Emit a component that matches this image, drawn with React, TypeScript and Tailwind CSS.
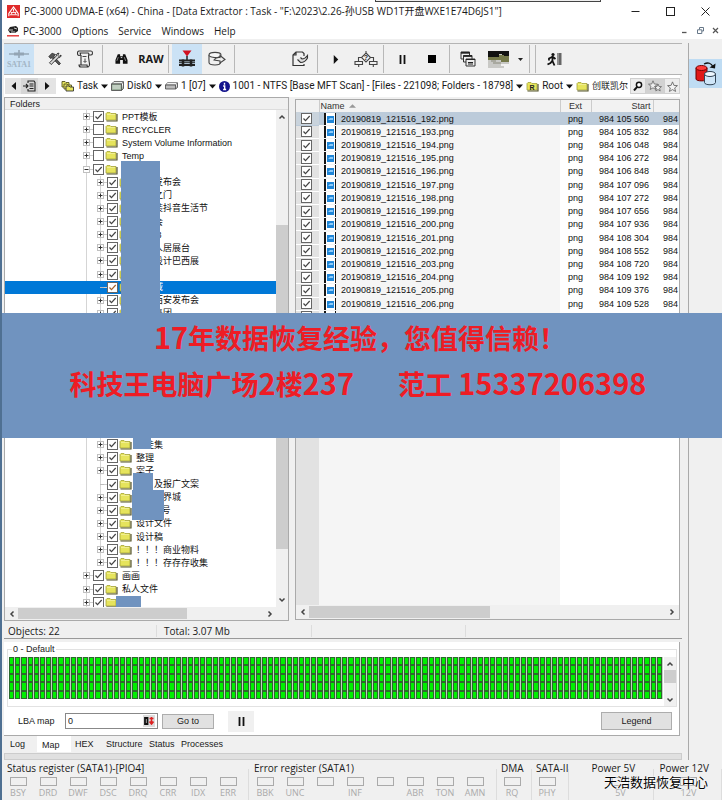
import type { ReactNode } from 'react';

const uiFont = "font-['Open_Sans','Noto_Sans_CJK_SC',sans-serif]";
const listFont = "font-['Liberation_Sans','Noto_Sans_CJK_SC',sans-serif]";

interface TreeItem {
  label: string;
  level: 1 | 2;
  checked?: boolean;
  toggle?: '+' | '-' | '';
  selected?: boolean;
}

const tree: TreeItem[] = [
  { label: 'PPT模板', level: 1, checked: true },
  { label: 'RECYCLER', level: 1 },
  { label: 'System Volume Information', level: 1 },
  { label: 'Temp', level: 1 },
  { label: '', level: 1, checked: true, toggle: '-' },
  { label: '　　发布会', level: 2, checked: true },
  { label: '　　之门', level: 2, checked: true },
  { label: '　　装抖音生活节', level: 2, checked: true },
  { label: '　　会', level: 2, checked: true },
  { label: '　　 8', level: 2, checked: true },
  { label: '　　人居展台', level: 2, checked: true },
  { label: '　　设计巴西展', level: 2, checked: true },
  { label: '', level: 2, checked: true },
  { label: '　　域', level: 2, checked: true, toggle: '', selected: true },
  { label: '　　西安发布会', level: 2, checked: true },
  { label: '　　集团', level: 2, checked: true },
  { label: '', level: 2, checked: true },
  { label: '', level: 2, checked: true },
  { label: '', level: 2, checked: true },
  { label: '', level: 2, checked: true },
  { label: '', level: 2, checked: true },
  { label: '', level: 2, checked: true },
  { label: '', level: 2, checked: true },
  { label: '', level: 2, checked: true },
  { label: '', level: 2, checked: true },
  { label: '　佳集', level: 2, checked: true },
  { label: '整理', level: 2, checked: true },
  { label: '案子', level: 2, checked: true },
  { label: '　　及报广文案', level: 2, checked: true, toggle: '' },
  { label: '　　　界城', level: 2, checked: true },
  { label: '　　 0号', level: 2, checked: true },
  { label: '设计文件', level: 2, checked: true },
  { label: '设计稿', level: 2, checked: true },
  { label: '！！！商业物料', level: 2, checked: true },
  { label: '！！！存存存收集', level: 2, checked: true },
  { label: '画画', level: 1, checked: true },
  { label: '私人文件', level: 1, checked: true },
  { label: '', level: 1, checked: true },
];

const files = [
  ['192', '984 105 560'],
  ['193', '984 105 832'],
  ['194', '984 106 048'],
  ['195', '984 106 272'],
  ['196', '984 106 848'],
  ['197', '984 107 096'],
  ['198', '984 107 272'],
  ['199', '984 107 656'],
  ['200', '984 107 936'],
  ['201', '984 108 304'],
  ['202', '984 108 552'],
  ['203', '984 108 720'],
  ['204', '984 109 192'],
  ['205', '984 109 376'],
  ['206', '984 109 528'],
  ['207', '984 109 744'],
];

function Folder({ letter }: { letter?: string }) {
  return (
    <svg viewBox="0 0 13 11" className="w-[13px] h-[11px] shrink-0">
      <path d="M1 9V2.5L2 1.5H5L6 2.5H11V9Z" fill="#e6e45c" stroke="#a5a33a" strokeWidth="0.8" />
      {!letter && <path d="M2 3.5H10" stroke="#f0ee90" />}
      <path d="M1.5 10H12V3" fill="none" stroke="#55542a" strokeWidth="1.2" />
      {letter && (
        <text x="3.5" y="8.5" fontSize="7" fontWeight="700" fill="#222" fontFamily="Liberation Sans">
          {letter}
        </text>
      )}
    </svg>
  );
}

function Check({ checked, label, warm }: { checked?: boolean; label: string; warm?: boolean }) {
  return (
    <span className="relative inline-flex w-[11px] h-[11px] shrink-0">
      <input
        type="checkbox"
        aria-label={label}
        defaultChecked={checked}
        className="peer appearance-none w-[11px] h-[11px] bg-white border border-[#666]"
      />
      <svg viewBox="0 0 11 11" className="absolute inset-0 pointer-events-none hidden peer-checked:block">
        <path d="M2.5 5.5L4.5 7.7L8.7 3" fill="none" stroke={warm ? '#a8642c' : '#444'} strokeWidth="1.2" />
      </svg>
    </span>
  );
}

function Arrow({ dir, className = '' }: { dir: 'up' | 'down' | 'left' | 'right'; className?: string }) {
  const paths = {
    up: 'M1.5 5.5L4 3L6.5 5.5',
    down: 'M1.5 2.5L4 5L6.5 2.5',
    left: 'M5.5 1.5L3 4L5.5 6.5',
    right: 'M2.5 1.5L5 4L2.5 6.5',
  };
  return (
    <button aria-label={`Scroll ${dir}`} className={`flex items-center justify-center shrink-0 ${className}`}>
      <svg viewBox="0 0 8 8" className="w-2 h-2">
        <path d={paths[dir]} fill="none" stroke="#444" strokeWidth="1.5" />
      </svg>
    </button>
  );
}

function Tool({ label, active, children }: { label: string; active?: boolean; children: ReactNode }) {
  return (
    <button
      aria-label={label}
      className={`w-[30px] h-[30px] shrink-0 flex items-center justify-center ${active ? 'bg-[#cbe2f5]' : ''}`}
    >
      {children}
    </button>
  );
}

function Sep() {
  return <div className="w-px h-7 ml-0.5 mr-[3px] shrink-0 bg-[#b8b8b8]" />;
}

function Caret() {
  return (
    <svg viewBox="0 0 7 5" className="w-[7px] h-[5px] shrink-0">
      <path d="M0 0.5H7L3.5 4.5Z" fill="#111" />
    </svg>
  );
}

function TitleBar() {
  return (
    <header className="h-[22px] flex items-center pl-[5px] bg-white">
      <svg viewBox="0 0 14 14" className="w-[13px] h-[13px] mr-1 shrink-0">
        <rect width="14" height="14" fill="#e02a2a" />
        <path d="M2 12V9L7 2L12 9V12" fill="none" stroke="#fff" strokeWidth="1.2" />
        <path d="M4 8H10M3 10.5H11M7 4V7M5 8V10M9 8V10" stroke="#fff" />
      </svg>
      <h1 className="flex-1 text-[10px] leading-3 whitespace-nowrap">
        PC-3000 UDMA-E (x64) - China - [Data Extractor : Task - "F:\2023\2.26-孙USB WD1T开盘WXE1E74D6JS1"]
      </h1>
      <div className="flex">
        <button aria-label="Minimize" className="w-[35px] flex justify-center">
          <svg viewBox="0 0 9 9" className="w-[9px] h-[9px]"><path d="M0.5 4.5H8.5" stroke="#222" /></svg>
        </button>
        <button aria-label="Maximize" className="w-[35px] flex justify-center">
          <svg viewBox="0 0 9 9" className="w-[9px] h-[9px]"><rect x="0.5" y="0.5" width="8" height="8" fill="none" stroke="#222" /></svg>
        </button>
        <button aria-label="Close" className="w-[34px] flex justify-center">
          <svg viewBox="0 0 9 9" className="w-[9px] h-[9px]"><path d="M0.5 0.5L8.5 8.5M8.5 0.5L0.5 8.5" stroke="#222" /></svg>
        </button>
      </div>
    </header>
  );
}

function MenuBar() {
  return (
    <nav className="h-[17px] flex items-center pl-[5px] bg-white text-[10px] leading-3">
      <svg viewBox="0 0 12 12" className="w-3 h-3 mr-1 shrink-0">
        <path d="M1 5L3 2L9 1L11 3V6L8 8L3 8Z" fill="#222" />
        <path d="M2 5H6M7 3L10 4M4 7H8" stroke="#ddd" strokeWidth="0.9" />
        <path d="M0 10.8H12" stroke="#e03030" strokeWidth="1.4" />
      </svg>
      <div className="flex-1 flex gap-[10px]">
        {['PC-3000', 'Options', 'Service', 'Windows', 'Help'].map((m) => (
          <button key={m}>{m}</button>
        ))}
      </div>
      <div className="flex text-[#555]">
        <button aria-label="Minimize child" className="w-[15px] flex justify-center">
          <svg viewBox="0 0 7 7" className="w-[7px] h-[7px]"><path d="M1 5.5H5.5" stroke="#555" strokeWidth="1.3" /></svg>
        </button>
        <button aria-label="Restore child" className="w-4 flex justify-center">
          <svg viewBox="0 0 7 7" className="w-[7px] h-[7px]"><path d="M2.5 2.5V0.5H6.5V4H5M0.5 2.8H4.8V6.5H0.5Z" fill="none" stroke="#678" /></svg>
        </button>
        <button aria-label="Close child" className="w-[14px] flex justify-center">
          <svg viewBox="0 0 7 7" className="w-[7px] h-[7px]"><path d="M1 1L6 6M6 1L1 6" stroke="#555" strokeWidth="1.2" /></svg>
        </button>
      </div>
    </nav>
  );
}

function Toolbar() {
  return (
    <div className="h-8 mr-[6px] flex items-center border-y border-[#b4b4b4] overflow-hidden">
      <Tool label="SATA1" active>
        <svg viewBox="0 0 26 26" className="w-[26px] h-[26px]">
          <path d="M3 8H23" stroke="#93a5b4" strokeWidth="1.4" />
          <path d="M8 6.5H18V9.5H8Z" fill="#93a5b4" />
          <path d="M13 4V12" stroke="#93a5b4" strokeWidth="1.6" />
          <text x="13" y="21" textAnchor="middle" fontSize="8" fontWeight="700" fill="#a3b5c4" fontFamily="Liberation Serif">SATA1</text>
        </svg>
      </Tool>
      <div className="w-[6px] shrink-0" />
      <Tool label="Settings">
        <svg viewBox="0 0 14 14" className="w-[14px] h-[14px]">
          <path d="M0.8 4.5L4 1.2L7.5 2.5L5.8 4.2L12.5 11.5L11 13L4 5.8L2.5 6.5Z" fill="#555" stroke="#222" strokeWidth="0.7" />
          <path d="M13 3L11 4.5L9.7 3.3L11 1.3C9.5 0.8 8 2.3 8.3 4L1.5 10.8L3.2 12.5L10 5.8C11.7 6 13.5 4.5 13 3Z" fill="#ddd" stroke="#222" strokeWidth="0.9" />
        </svg>
      </Tool>
      <Tool label="Script">
        <svg viewBox="0 0 18 18" className="w-[18px] h-[18px]">
          <path d="M3 5.5C1 5.5 1 1 3 1H15C17 1 17 5 15 5H12.5M3 5.5C5 5.5 5 3 3.5 3H12C13.5 3 12.5 5 12.5 7L13.5 14C13.8 17.5 11 17.5 11 15H3C3 17 4 17 5 17H12.5M5 5V14.5" fill="none" stroke="#333" strokeWidth="1.1" />
          <path d="M6.5 6.5H10.5M9 8.5V12M7.5 11L9 12.5L10.5 11" fill="none" stroke="#333" strokeWidth="0.9" />
        </svg>
      </Tool>
      <Sep />
      <Tool label="Find">
        <svg viewBox="0 0 14 12" className="w-[13px] h-[12px]">
          <path d="M3 1H5.5V3H8.5V1H11L13.5 7V11H8.5V7H5.5V11H0.5V7Z" fill="#111" />
          <path d="M3.5 4L2 8M10 4L11.5 8" stroke="#aaa" strokeWidth="0.8" />
          <path d="M6.2 4.5H7.8" stroke="#eee" />
        </svg>
      </Tool>
      <Tool label="RAW">
        <span className="text-[11px] font-bold leading-4">RAW</span>
      </Tool>
      <Sep />
      <Tool label="Map view" active>
        <svg viewBox="0 0 18 18" className="w-[18px] h-[18px]">
          <path d="M4.5 0.5H13.5L9 6.5Z" fill="#d01020" />
          <path d="M9 6V10" stroke="#222" strokeWidth="1.5" />
          <path d="M1 10.5H17M1 15H17" stroke="#222" strokeWidth="1.8" />
          <path d="M1 12.7H17" stroke="#222" strokeWidth="1" />
          <path d="M5 9.5V16.5M13 9.5V16.5" stroke="#222" strokeWidth="2.5" />
        </svg>
      </Tool>
      <Tool label="Save disk">
        <svg viewBox="0 0 18 16" className="w-[18px] h-4">
          <path d="M1 4V11.5C1 13 4 14 7 14S12.5 13 12.5 11.5" fill="none" stroke="#444" strokeWidth="1.1" />
          <ellipse cx="7" cy="4" rx="6" ry="2.6" fill="#f6f6f6" stroke="#444" strokeWidth="1.1" />
          <path d="M6 9C8 6.5 10 6 12 6.5V4.5L17 8.5L12 12V10C10 9.5 8 9.5 6 9Z" fill="#eee" stroke="#444" strokeWidth="1.1" />
        </svg>
      </Tool>
      <Sep />
      <div className="w-[47px] shrink-0" />
      <Tool label="Export">
        <svg viewBox="0 0 17 16" className="w-[17px] h-4">
          <path d="M12 5V2.5L10.5 1H4L1 4V14.5H12V13M4 1V4H1" fill="none" stroke="#333" strokeWidth="1.2" />
          <path d="M5.5 8.5L8.5 11.5C11 11.5 14 10 15.5 7V4.5C14 6.5 11.5 8 10 8L8.5 6.5" fill="#ddd" stroke="#333" strokeWidth="1.1" />
        </svg>
      </Tool>
      <Sep />
      <Tool label="Start">
        <svg viewBox="0 0 6 10" className="w-[6px] h-[9px]"><path d="M0.5 0L5.5 5L0.5 10Z" fill="#111" /></svg>
      </Tool>
      <Tool label="Flow">
        <svg viewBox="0 0 24 17" className="w-6 h-[17px]">
          <path d="M12 0V2M12 2L16.5 6.5L12 11L7.5 6.5Z" fill="#f7f7f7" stroke="#444" strokeWidth="1.1" />
          <text x="12" y="9" textAnchor="middle" fontSize="7" fontWeight="700" fill="#222" fontFamily="Liberation Sans">?</text>
          <path d="M7.5 6.5H4.5V10M16.5 6.5H19.5V10M1 10.5H8.5V13.5H1ZM15.5 10.5H23V13.5H15.5ZM4.7 13.5V16M19.3 13.5V16" fill="none" stroke="#444" strokeWidth="1.1" />
        </svg>
      </Tool>
      <Sep />
      <Tool label="Pause">
        <svg viewBox="0 0 7 9" className="w-[7px] h-[9px]"><path d="M1.5 0V9M5.5 0V9" stroke="#111" strokeWidth="1.8" /></svg>
      </Tool>
      <Tool label="Stop">
        <span className="w-2 h-2 bg-black" />
      </Tool>
      <Sep />
      <Tool label="Cascade">
        <svg viewBox="0 0 16 16" className="w-4 h-4">
          <path d="M1 1H9.5V8H1Z" fill="#eee" stroke="#333" />
          <path d="M1 1.8H9.5" stroke="#222" strokeWidth="1.8" />
          <path d="M3.5 4.5H12V11H3.5Z" fill="#eee" stroke="#333" />
          <path d="M3.5 5H12" stroke="#222" strokeWidth="1.8" />
          <path d="M6 8H15V15H6Z" fill="#eee" stroke="#333" />
          <path d="M6 8.5H15M8 11.5H13M8 13H13" stroke="#222" strokeWidth="1.2" />
        </svg>
      </Tool>
      <Tool label="Picture">
        <svg viewBox="0 0 21 17" className="w-[21px] h-[17px]">
          <rect width="21" height="17" fill="#c9c9c6" />
          <path d="M0 0H21V5H14V3H11V6H0Z" fill="#111" />
          <path d="M0 6H11V4H16V5H21V11H13V9H0Z" fill="#75794a" />
          <path d="M3 9H8V11H13V13H5V11H3Z" fill="#a9a9a0" />
          <path d="M13 13H21V17H16V15H13Z" fill="#f3f3f3" />
        </svg>
      </Tool>
      <button aria-label="Picture options" className="w-[14px] flex justify-center shrink-0">
        <svg viewBox="0 0 5 3" className="w-[5px] h-[3px]"><path d="M0 0H5L2.5 3Z" fill="#222" /></svg>
      </button>
      <Sep />
      <Sep />
      <Tool label="Exit">
        <svg viewBox="0 0 15 15" className="w-[15px] h-[15px]">
          <rect x="10" y="1" width="4.5" height="12" fill="#666" />
          <path d="M11 1V13" stroke="#bbb" />
          <circle cx="6" cy="2.5" r="1.6" fill="#111" />
          <path d="M5.5 4V9L7.5 13.5M5.5 8.5L3.5 11L0.5 12.5M6 5L8.5 7M5 5L2 6.5V8.5" fill="none" stroke="#111" strokeWidth="1.8" />
        </svg>
      </Tool>
    </div>
  );
}

function Breadcrumb() {
  return (
    <nav className="h-[22px] mr-2 pl-px flex items-center bg-white text-[10px] leading-3 whitespace-nowrap overflow-hidden font-['Roboto','Noto_Sans_CJK_SC',sans-serif]">
      <div className="flex h-4 bg-[#e4e4e4]">
        <button aria-label="Back" className="w-4 flex items-center justify-center">
          <svg viewBox="0 0 5 8" className="w-[5px] h-2"><path d="M5 0V8L0.5 4Z" fill="#111" /></svg>
        </button>
        <button aria-label="History" className="w-[17px] flex items-center justify-center bg-[#d6d6d6]">
          <svg viewBox="0 0 13 12" className="w-[13px] h-3">
            <path d="M5 3V1H11L12 2.5V11H5V9M0 6H5M3 4L5 6L3 8" fill="none" stroke="#222" strokeWidth="1.1" />
            <path d="M6.5 4H10.5M6.5 6H10.5M6.5 8.5H10.5" stroke="#222" />
          </svg>
        </button>
        <button aria-label="Forward" className="w-[18px] flex items-center justify-center">
          <svg viewBox="0 0 5 8" className="w-[5px] h-2"><path d="M0 0V8L4.5 4Z" fill="#111" /></svg>
        </button>
      </div>
      <a href="#task" className="flex items-center gap-[3px] ml-[5px]">
        <svg viewBox="0 0 13 12" className="w-[13px] h-3">
          <path d="M1 7V1.5H4L5 2.5H8V7Z" fill="#e6e45c" stroke="#555320" strokeWidth="0.9" />
          <path d="M3 9V4H6L7 5H10.5V9Z" fill="#e6e45c" stroke="#555320" strokeWidth="0.9" />
          <path d="M5 11V6H8L9 7H12.5V11Z" fill="#e6e45c" stroke="#333" strokeWidth="0.9" />
        </svg>
        Task <Caret />
      </a>
      <a href="#disk0" className="flex items-center gap-[3px] ml-[3px]">
        <svg viewBox="0 0 13 10" className="w-[13px] h-[10px]">
          <path d="M3 0.5H12.5L10.5 3H0.5Z" fill="#e8eee8" stroke="#555" strokeWidth="0.8" />
          <path d="M0.5 3H10.5V9.5H0.5ZM12.5 1V7.5L10.5 9.5" fill="#9ab09a" stroke="#444" strokeWidth="0.8" />
          <path d="M1.5 5H9.5M1.5 7H9.5" stroke="#e8eee8" />
        </svg>
        Disk0 <Caret />
      </a>
      <a href="#part1" className="flex items-center gap-[3px] ml-[3px]">
        <svg viewBox="0 0 13 8" className="w-[13px] h-2">
          <path d="M2.5 0.5H12.5L10.5 3H0.5Z" fill="#f3f3f3" stroke="#777" strokeWidth="0.8" />
          <path d="M0.5 3H10.5V7H0.5ZM12.5 1V5.5L10.5 7" fill="#bbb" stroke="#444" strokeWidth="0.8" />
        </svg>
        1 [07] <Caret />
      </a>
      <a href="#scan" className="flex items-center gap-[3px] ml-[3px]">
        <svg viewBox="0 0 12 12" className="w-[11px] h-[11px]">
          <circle cx="6" cy="6" r="6" fill="#14148c" />
          <path d="M6 2V4M4.5 5.5H6.2V9M4.5 9.3H7.8" stroke="#fff" strokeWidth="1.5" fill="none" />
        </svg>
        1001 - NTFS [Base MFT Scan] - [Files - 221098; Folders - 18798] <Caret />
      </a>
      <a href="#root" className="flex items-center gap-[3px] ml-[3px]">
        <Folder letter="R" />
        Root <Caret />
      </a>
      <a href="#folder" className="flex items-center gap-[3px] ml-[3px]">
        <Folder />
        <span className="text-[9px]">创联凯尔</span>
      </a>
      <div className="flex-1" />
      <div className="flex shrink-0 bg-[#ececec]">
        <button aria-label="Search" className="w-4 h-4 border border-[#d0d0d0] flex items-center justify-center">
          <svg viewBox="0 0 10 10" className="w-[10px] h-[10px]">
            <circle cx="6" cy="3.8" r="2.6" fill="#fff" stroke="#111" strokeWidth="1.5" />
            <path d="M4.2 5.8L1 9.5" stroke="#111" strokeWidth="2" />
          </svg>
        </button>
        <button aria-label="Bookmarks" className="w-[18px] h-4 bg-[#d2d2d2] flex items-center justify-center">
          <svg viewBox="0 0 14 12" className="w-[14px] h-3">
            <path d="M5 0.8L6.3 4L9.5 4.2L7 6.3L7.8 9.5L5 7.8L2.2 9.5L3 6.3L0.5 4.2L3.7 4Z" fill="#eee" stroke="#666" strokeWidth="0.8" />
            <path d="M10 4L11 6.5L13.5 6.6L11.6 8.3L12.2 11L10 9.5L7.8 11L8.4 8.3L6.5 6.6L9 6.5Z" fill="#eee" stroke="#666" strokeWidth="0.8" />
          </svg>
        </button>
        <button aria-label="Add bookmark" className="w-4 h-4 border border-[#d0d0d0] flex items-center justify-center">
          <svg viewBox="0 0 10 10" className="w-[11px] h-[11px]">
            <path d="M5 0.8L6.3 4L9.5 4.2L7 6.3L7.8 9.5L5 7.8L2.2 9.5L3 6.3L0.5 4.2L3.7 4Z" fill="#f4f4f4" stroke="#666" strokeWidth="0.8" />
          </svg>
        </button>
      </div>
    </nav>
  );
}

function TreeRow({ item }: { item: TreeItem }) {
  const toggle = item.toggle ?? '+';
  const indent = item.level === 2 ? 'pl-[92px]' : 'pl-[78px]';
  return (
    <li className={`flex-1 min-h-0 flex items-center pr-2 ${indent} ${item.selected ? 'bg-[#0078d7] text-white' : ''}`}>
      {toggle ? (
        <button aria-label={`Toggle ${item.label.trim()}`} className="w-[7px] h-[7px] shrink-0 border border-[#c0c0c0] bg-white">
          <svg viewBox="0 0 5 5" className="w-[5px] h-[5px]">
            <path d={toggle === '+' ? 'M0.5 2.5H4.5M2.5 0.5V4.5' : 'M0.5 2.5H4.5'} stroke="#333" strokeWidth="1" />
          </svg>
        </button>
      ) : (
        <span className="w-1 ml-[3px] shrink-0 border-t border-[#bbb]" />
      )}
      <span className="w-[3px] shrink-0 border-t border-[#ccc]" />
      <span className="mr-px flex"><Check checked={item.checked} label={item.label.trim() || 'Folder'} warm={item.selected} /></span>
      <Folder />
      <span className="ml-1 whitespace-pre">{item.label}</span>
    </li>
  );
}

function FolderPanel() {
  return (
    <section className={`w-[285px] shrink-0 flex flex-col border border-[#aaa] bg-white ${listFont}`}>
      <h2 className="h-3 pl-[5px] text-[9px] leading-3 bg-[#f0f0f0] border-b border-[#ddd]">Folders</h2>
      <div className="flex-1 flex min-h-0">
        <div className="flex-1 relative overflow-hidden flex">
          <div className="absolute left-[81px] inset-y-0 border-l border-[#d5d5d5]" />
          <div className="absolute left-[95px] top-[66px] bottom-[46px] border-l border-[#d5d5d5]" />
          <ul className="relative flex-1 flex flex-col -mb-0.5 text-[9px] leading-3 text-[#111]">
            {tree.map((item, i) => (
              <TreeRow key={i} item={item} />
            ))}
          </ul>
          {/* redaction patches over client names */}
          <div className="absolute left-[116px] top-[51px] w-[39px] h-[160px] bg-[#7093bf]" />
          <div className="absolute left-[128px] top-[320px] w-[18px] h-[19px] bg-[#7093bf]" />
          <div className="absolute left-[128px] top-[363px] w-[20px] h-[20px] bg-[#7093bf]" />
          <div className="absolute left-[127px] top-[380px] w-[32px] h-[30px] bg-[#7093bf]" />
          <div className="absolute left-[111px] top-[486px] w-[25px] h-[11px] bg-[#7093bf]" />
        </div>
        <div className="w-3 shrink-0 flex flex-col bg-[#f0f0f0]">
          <Arrow dir="up" className="h-[14px]" />
          <div className="h-[101px]" />
          <div className="flex-1 bg-[#cdcdcd]" />
          <div className="h-[44px]" />
          <Arrow dir="down" className="h-[14px]" />
        </div>
      </div>
      <div className="h-[13px] shrink-0 flex bg-[#f0f0f0]">
        <Arrow dir="left" className="w-[13px]" />
        <div className="w-[169px] my-px bg-[#cdcdcd]" />
        <div className="flex-1" />
        <Arrow dir="right" className="w-[13px] mr-3" />
      </div>
    </section>
  );
}

function FilePanel() {
  return (
    <section className={`flex-1 min-w-0 mt-0.5 mb-px flex flex-col border border-[#aaa] bg-white ${listFont}`}>
      <table className="w-full h-[224px] table-fixed border-collapse text-[9px] leading-3 text-[#111]">
        <colgroup>
          <col className="w-[23px]" />
          <col />
          <col className="w-[31px]" />
          <col className="w-[62px]" />
          <col className="w-[26px]" />
        </colgroup>
        <thead>
          <tr className="h-3 bg-[#f2f2f2] text-[#333]">
            <th className="p-0 border-r border-[#ccc]"></th>
            <th className="p-0 pl-px text-left font-normal border-r border-[#ccc]">
              <span className="flex items-center gap-1">
                Name
                <svg viewBox="0 0 8 4" className="w-[7px] h-1"><path d="M0 4L4 0L8 4Z" fill="#999" /></svg>
              </span>
            </th>
            <th className="p-0 font-normal border-r border-[#ccc]">Ext</th>
            <th className="p-0 pr-0.5 text-right font-normal border-r border-[#ccc]">Start</th>
            <th className="p-0"></th>
          </tr>
        </thead>
        <tbody>
          {files.map(([n, start], i) => (
            <tr key={n} className={i === 0 ? 'bg-[#bccbda]' : ''}>
              <td className={`p-0 border-b ${i === 0 ? 'bg-[#c9d3dc] border-[#bccbda]' : 'bg-[#e2e2e2] border-white'}`}>
                <span className="flex justify-center mr-0.5"><Check checked label={`Select ${n}`} /></span>
              </td>
              <td className={`p-0 ${i === 0 ? '' : 'bg-[#f5f5f5]'}`}>
                <span className="flex items-center gap-[5px] pl-[5px]">
                  <svg viewBox="0 0 12 12" className="w-3 h-3">
                    <rect width="12" height="12" fill="#151515" />
                    <rect x="2" width="9" height="12" fill="#fff" />
                    <rect x="3" y="3" width="7" height="7" fill="#1f86d8" />
                    <path d="M4 7L6 5H9V7Z" fill="#8ccaf8" />
                  </svg>
                  20190819_121516_{n}.png
                </span>
              </td>
              <td className="p-0 text-center">png</td>
              <td className="p-0 pr-1 text-right">{start}</td>
              <td className="p-0 pl-[10px] whitespace-nowrap">984</td>
            </tr>
          ))}
        </tbody>
      </table>
      <div className="flex-1 flex">
        <div className="w-[23px] bg-[#e2e2e2]" />
        <div className="flex-1 bg-[#f5f5f5]" />
        <div className="w-[119px]" />
      </div>
      <div className="h-[14px] shrink-0 flex bg-[#f0f0f0]">
        <Arrow dir="left" className="w-[13px]" />
        <div className="w-[181px] my-px bg-[#cdcdcd]" />
        <div className="flex-1" />
        <Arrow dir="right" className="w-[14px]" />
      </div>
    </section>
  );
}

function StatusBar() {
  return (
    <div className="h-4 mt-0.5 mr-[6px] flex items-center border-b border-[#999] text-[10px] leading-3">
      <span className="w-[153px] pl-1 border-r border-[#ddd]">Objects: 22</span>
      <span className="w-[155px] pl-[7px] border-r border-[#ddd]">Total: 3.07 Mb</span>
      <span className="w-[154px] h-3 border-r border-[#ddd]" />
    </div>
  );
}

function MapPanel() {
  return (
    <section className={`mt-[3px] mr-2 pt-px bg-white border-b border-r border-[#aaa] text-[9px] leading-3 ${listFont}`}>
      <fieldset className="ml-[3px] mr-0.5 pt-0.5 border border-[#e2e2e2]">
        <legend className="ml-1 px-px text-[#222]">0 - Default</legend>
        <div className="flex">
          <div className="flex-1 h-[42px] ml-px mb-[7px] grid grid-rows-5 grid-cols-[repeat(106,minmax(0,1fr))] bg-[#c4ccc4]">
            {Array.from({ length: 530 }, (_, i) => (
              <span key={i} className="mr-px bg-[#00f000] border border-[#2c6a2c]" />
            ))}
          </div>
          <div className="w-3 ml-px flex flex-col bg-[#f0f0f0]">
            <Arrow dir="up" className="h-[13px]" />
            <div className="h-[13px] bg-[#cdcdcd]" />
            <div className="flex-1" />
            <Arrow dir="down" className="h-[13px]" />
          </div>
        </div>
      </fieldset>
      <div className="h-[28px] flex items-center pl-[14px] pr-[7px]">
        <label htmlFor="lba" className="w-[47px]">LBA map</label>
        <div className="w-[93px] h-4 flex items-center border border-[#888] bg-white">
          <input id="lba" defaultValue="0" className="w-0 flex-1 pl-0.5 outline-none bg-transparent" />
          <button aria-label="Number base" className="w-3 h-3 mr-0.5 bg-[#ddd] flex items-center justify-center">
            <svg viewBox="0 0 10 8" className="w-[10px] h-2">
              <path d="M1 1H3.5V7H1Z" fill="none" stroke="#111" strokeWidth="1.8" />
              <path d="M7.5 0V7M5.5 4.5L7.5 7L9.5 4.5M5.5 1.5H9.5" stroke="#d22" strokeWidth="1.6" fill="none" />
            </svg>
          </button>
        </div>
        <button className="w-[52px] h-[15px] ml-1 bg-[#e1e1e1] border border-[#adadad]">Go to</button>
        <button aria-label="Pause map" className="w-[26px] h-[21px] ml-[14px] bg-[#f0f0f0] flex items-center justify-center mr-auto">
          <svg viewBox="0 0 7 9" className="w-[7px] h-[9px]"><path d="M1.5 0V9M5.5 0V9" stroke="#111" strokeWidth="1.8" /></svg>
        </button>
        <button className="w-[71px] h-[18px] bg-[#e1e1e1] border border-[#adadad]">Legend</button>
      </div>
    </section>
  );
}

function Tabs() {
  return (
    <div role="tablist" className={`h-[17px] flex items-start text-[9px] leading-4 ${listFont}`}>
      <button role="tab" className="w-[33px] pl-[6px] text-left">Log</button>
      <button role="tab" aria-selected className="w-[34px] h-4 pt-0.5 leading-3 pl-[5px] text-left bg-white">Map</button>
      <button role="tab" className="w-[35px] pl-1 text-left">HEX</button>
      <button role="tab" className="w-[43px] text-left">Structure</button>
      <button role="tab" className="w-8 text-left">Status</button>
      <button role="tab" className="text-left">Processes</button>
    </div>
  );
}

function Register({ title, bits, className }: { title: string; bits: string[]; className: string }) {
  return (
    <fieldset className={`shrink-0 border-r border-[#ddd] ${className}`}>
      <legend className="h-[13px] leading-[13px] text-[10px] whitespace-nowrap">{title}</legend>
      <div className="flex -ml-1 pt-0.5">
        {bits.map((bit, i) => (
          <div key={i} className="w-[30px] shrink-0 flex flex-col items-center text-[9px] leading-3 text-[#aaa]">
            <span className="w-[17px] h-[9px] mb-px border border-[#aaa]" />
            {bit}
          </div>
        ))}
      </div>
    </fieldset>
  );
}

// Latin digits run slightly larger than the Chinese text around them
function Digits({ children }: { children: ReactNode }) {
  return <span className="text-[29px]">{children}</span>;
}

export default function App() {
  return (
    <div className={`relative min-h-screen flex flex-col border-l-2 border-[#4f7092] bg-[#f0f0f0] text-[#1a1a1a] overflow-hidden ${uiFont}`}>
      <div className="absolute left-[373px] top-0 w-[226px] h-[2px] border-x border-b border-[#444] bg-[#eee]" />
      <TitleBar />
      <MenuBar />
      <div className="h-1 shrink-0" />
      <div className="flex flex-1">
        <main className="flex-1 min-w-0 flex flex-col pl-0.5 border-r border-[#aaa]">
          <Toolbar />
          <Breadcrumb />
          <div className="flex-1 flex gap-[6px] mr-2">
            <FolderPanel />
            <FilePanel />
          </div>
          <StatusBar />
          <MapPanel />
          <Tabs />
          <div className="h-[7px] mr-[6px] bg-[#e0e0e0] border border-[#ccc]" />
        </main>
        <aside className="w-[33px] shrink-0 pt-4">
          <button aria-label="Copy disk" className="w-full h-[29px] flex items-center justify-center bg-[#bfdcf3]">
            <svg viewBox="0 0 22 24" className="w-[22px] h-6">
              <path d="M1 6V17C1 19.5 12 19.5 12 17V6" fill="#e01818" stroke="#600" />
              <ellipse cx="6.5" cy="6" rx="5.5" ry="2.5" fill="#ff3a3a" stroke="#700" />
              <path d="M9.5 12V20.5C9.5 23.5 20.5 23.5 20.5 20.5V12" fill="#cfe6f8" stroke="#345" />
              <ellipse cx="15" cy="12" rx="5.5" ry="2.5" fill="#eef7ff" stroke="#345" />
              <path d="M9 2C13 0 16.5 1 18 5" fill="none" stroke="#111" strokeWidth="1.3" />
              <path d="M14.5 5.5L20 6.5L20.5 1.5Z" fill="#111" />
            </svg>
          </button>
        </aside>
      </div>
      <footer className="h-[38px] mt-0.5 flex overflow-hidden">
        <Register title="Status register (SATA1)-[PIO4]" bits={['BSY', 'DRD', 'DWF', 'DSC', 'DRQ', 'CRR', 'IDX', 'ERR']} className="w-[247px] pl-[5px] mr-px" />
        <Register title="Error register (SATA1)" bits={['BBK', 'UNC', '', 'INF', '', 'ABR', 'TON', 'AMN']} className="w-[247px] pl-1" />
        <Register title="DMA" bits={['RQ']} className="w-[35px] pl-1" />
        <Register title="SATA-II" bits={['PHY']} className="w-[37px] pl-1 mr-[15px]" />
        <Register title="Power 5V" bits={['5V']} className="w-[70px] pl-[7px] [&>div]:justify-center" />
        <Register title="Power 12V" bits={['12V']} className="w-[68px] pl-[5px] [&>div]:justify-center" />
      </footer>

      <div className="absolute inset-x-0 top-[313px] h-[125px] pt-[5px] bg-[#7093bf] text-[#ee1c25] text-[27px] leading-9 font-bold font-['Noto_Sans_CJK_SC',sans-serif] whitespace-nowrap">
        <p className="pr-1 text-center"><Digits>17</Digits>年数据恢复经验，您值得信赖！</p>
        <p className="mt-2 pr-2 flex justify-center gap-11">
          <span>科技王电脑广场<Digits>2</Digits>楼<Digits>237</Digits></span>
          <span>范工 <Digits>15337206398</Digits></span>
        </p>
      </div>
      <p className="absolute right-[14px] bottom-[10px] text-[13px] leading-4 text-black font-['Noto_Sans_CJK_SC',sans-serif] [text-shadow:0_0_1px_#fff,0_0_2px_#fff,0_0_2px_#fff]">天浩数据恢复中心</p>
    </div>
  );
}
